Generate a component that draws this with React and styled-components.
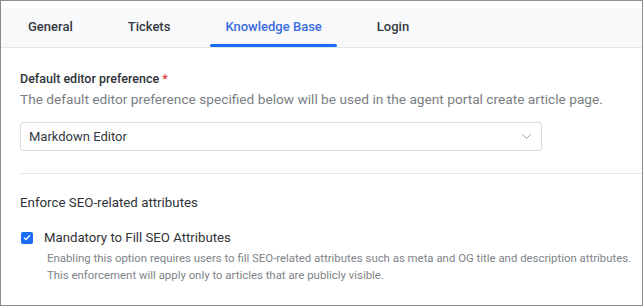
import styled, { createGlobalStyle } from "styled-components";

const GlobalStyle = createGlobalStyle`
  html, body {
    margin: 0;
    padding: 0;
    background: #fff;
  }
  body {
    font-family: Roboto, "Liberation Sans", sans-serif;
  }
`;

const tabs = ["General", "Tickets", "Knowledge Base", "Login"];

const App = () => {
  return (
    <Frame>
      <GlobalStyle />
      <TabBar>
        {tabs.map((t) => (
          <Tab key={t} active={t === "Knowledge Base"}>
            {t}
          </Tab>
        ))}
      </TabBar>
      <Content>
        <Field $top={23}>
          <Label>
            Default editor preference <Required>*</Required>
          </Label>
          <Description>
            The default editor preference specified below will be used in the
            agent portal create article page.
          </Description>
          <Select>
            <span>Markdown Editor</span>
            <svg width="9" height="5" viewBox="0 0 9 5" fill="none">
              <path d="M0.5 0.5L4.5 4.5L8.5 0.5" stroke="#9a9a9a" strokeWidth="1" />
            </svg>
          </Select>
        </Field>
        <Divider />
        <Field $top={21}>
          <SectionTitle>Enforce SEO-related attributes</SectionTitle>
          <CheckRow>
            <Checkbox>
              <svg width="8" height="7" viewBox="0 0 8 7" fill="none">
                <path d="M1 3.6L3 5.5L7 1.2" stroke="#fff" strokeWidth="1.3" />
              </svg>
            </Checkbox>
            <CheckLabel>Mandatory to Fill SEO Attributes</CheckLabel>
          </CheckRow>
          <HelpText>
            Enabling this option requires users to fill SEO-related attributes
            such as meta and OG title and description attributes.
            <br />
            This enforcement will apply only to articles that are publicly
            visible.
          </HelpText>
        </Field>
      </Content>
    </Frame>
  );
};

const Frame = styled.div`
  width: 643px;
  height: 306px;
  box-sizing: border-box;
  border: 1px solid #8c8c8c;
  padding-top: 7px;
  background: #fff;
  overflow: hidden;
`;

const TabBar = styled.div`
  display: flex;
  gap: 25px;
  height: 39px;
  padding-left: 12px;
  background: #f8f9fa;
  border-bottom: 1px solid #e4e6e9;
`;

const Tab = styled.div`
  position: relative;
  padding: 11px 15px 0;
  font-size: 13px;
  font-weight: 500;
  color: ${(p) => (p.active ? "#3b6de0" : "#333a42")};

  &::after {
    content: "";
    display: ${(p) => (p.active ? "block" : "none")};
    position: absolute;
    left: 0;
    right: 0;
    bottom: 0;
    height: 3px;
    border-radius: 2px;
    background: #1a6ef5;
  }
`;

const Content = styled.div`
  padding-left: 19px;
`;

const Field = styled.div`
  display: flex;
  flex-direction: column;
  padding-top: ${(p) => p.$top}px;
`;

const Label = styled.div`
  font-size: 12.5px;
  font-weight: 500;
  color: #2f3338;
`;

const Required = styled.span`
  color: #e0413a;
`;

const Description = styled.div`
  margin-top: 5px;
  font-size: 13.7px;
  color: #7a7e83;
`;

const Select = styled.div`
  margin-top: 15px;
  width: 522px;
  height: 29px;
  box-sizing: border-box;
  border: 1px solid #d9dce0;
  border-radius: 3px;
  display: flex;
  align-items: center;
  justify-content: space-between;
  padding: 0 10px 0 8px;
  font-size: 13px;
  color: #333a42;
`;

const Divider = styled.div`
  margin-top: 22px;
  height: 1px;
  background: #e3e5e8;
`;

const SectionTitle = styled.div`
  font-size: 13.3px;
  font-weight: 400;
  color: #2f3338;
`;

const CheckRow = styled.div`
  display: flex;
  align-items: center;
  gap: 11px;
  margin-top: 20px;
  padding-left: 1px;
`;

const Checkbox = styled.div`
  width: 12px;
  height: 12px;
  border-radius: 2px;
  background: #1a6ef5;
  display: flex;
  align-items: center;
  justify-content: center;
`;

const CheckLabel = styled.div`
  font-size: 13.2px;
  color: #2f3338;
`;

const HelpText = styled.div`
  margin-top: 5px;
  padding-left: 27px;
  font-size: 11.4px;
  line-height: 17px;
  color: #808488;
`;

export default App;
